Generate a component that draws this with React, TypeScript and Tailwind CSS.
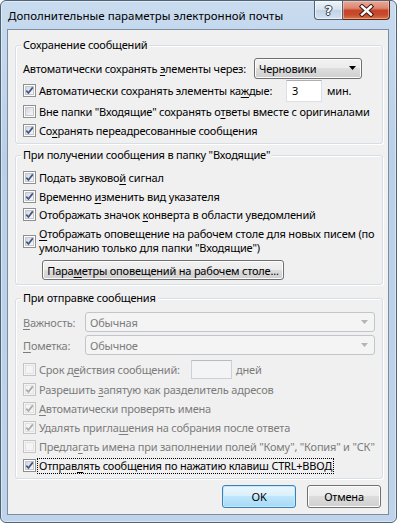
import React from 'react';

const U = ({ children }: { children: React.ReactNode }) => (
  <span className="underline underline-offset-[2px] decoration-[1px]">{children}</span>
);

const Check = ({ checked, disabled }: { checked?: boolean; disabled?: boolean }) => (
  <span
    className={`relative block w-[13px] h-[13px] shrink-0 border p-[1px] ${
      disabled ? 'border-[#c4c4c4] bg-[#f4f4f4]' : 'border-[#8e8f8f] bg-white'
    }`}
  >
    <span
      className={`block w-full h-full border ${
        disabled
          ? 'border-[#e2e2e2] bg-[#f4f4f4]'
          : 'border-[#c3c7cd] bg-[linear-gradient(135deg,#d4d7dc,#f9f9fa)]'
      }`}
    />
    {checked && (
      <svg className="absolute left-0 top-0" width="11" height="11" viewBox="0 0 11 11">
        <path
          d="M2.3 5.6 L4.4 8 L8.8 2.4"
          fill="none"
          stroke={disabled ? '#a9a9a9' : '#3f5687'}
          strokeWidth="1.7"
          strokeLinejoin="round"
        />
      </svg>
    )}
  </span>
);

const CheckRow = ({
  checked,
  disabled,
  h,
  children,
}: {
  checked?: boolean;
  disabled?: boolean;
  h: string;
  children: React.ReactNode;
}) => (
  <div className={`flex items-center ${h}`}>
    <Check checked={checked} disabled={disabled} />
    <span className={`ml-[3px] whitespace-nowrap ${disabled ? 'text-[#7c7c7c]' : ''}`}>{children}</span>
  </div>
);

const Group = ({ title, className, children }: { title: string; className: string; children: React.ReactNode }) => (
  <fieldset
    className={`ml-[7px] w-[368px] min-w-0 border border-[#d5dfe5] rounded-[3px] px-[7px] shadow-[inset_1px_1px_0_#fff,1px_1px_0_#fff] ${className}`}
  >
    <legend className="-ml-[2px] px-[2px] h-[16px] leading-[16px] bg-[#f0f0f0] whitespace-nowrap">{title}</legend>
    {children}
  </fieldset>
);

const Arrow = ({ color }: { color: string }) => (
  <svg width="7" height="4" viewBox="0 0 7 4">
    <path d="M0 0 H7 L3.5 4 Z" fill={color} />
  </svg>
);

const grayBtn =
  'border border-[#707070] rounded-[3px] bg-[linear-gradient(to_bottom,#f2f2f2,#ebebeb_49%,#dddddd_50%,#cfcfcf)] shadow-[inset_0_0_0_1px_#fcfcfc]';

export default function App() {
  return (
    <div className="w-[397px] h-[523px] bg-white font-['Noto_Sans',sans-serif] text-[11px] tracking-[-0.2px] leading-[15px] text-black">
      <div className="w-full h-full rounded-[6px] border border-[#4f6377] bg-[linear-gradient(to_bottom,#c8dbef,#bad0e9_30%,#bfd4eb)] shadow-[inset_0_0_0_1px_rgba(255,255,255,0.45)] flex flex-col">
        {/* title bar */}
        <div className="h-[28px] flex justify-between">
          <div className="pl-[7px] self-center text-[11.5px] tracking-normal whitespace-nowrap">
            Дополнительные параметры электронной почты
          </div>
          <div className="flex mr-[6px] h-[19px]">
            <div className="w-[29px] h-full border border-[#506174] border-t-0 rounded-bl-[4px] bg-[linear-gradient(to_bottom,#eef3f9,#d6e2ef_48%,#c2d3e6_52%,#d4e2f1)] flex items-center justify-center shadow-[inset_0_0_0_1px_rgba(255,255,255,0.6)]">
              <span className="text-white font-bold text-[13px] leading-[13px] font-['DejaVu_Sans',sans-serif] [text-shadow:0_0_1px_#2b3a4c,0_0_1px_#2b3a4c,1px_0_0_#3a4a5c,-1px_0_0_#3a4a5c,0_1px_0_#3a4a5c,0_-1px_0_#3a4a5c]">
                ?
              </span>
            </div>
            <div className="w-[47px] h-full border border-[#5b2418] border-t-0 border-l-0 rounded-br-[4px] bg-[linear-gradient(to_bottom,#e9aa9a,#dc8670_40%,#c7442b_52%,#c64a2c_75%,#d8763f)] flex items-center justify-center shadow-[inset_0_0_0_1px_rgba(255,210,200,0.5)]">
              <svg width="15" height="13" viewBox="0 0 15 13">
                <path d="M3 2.5 L12 10.5 M12 2.5 L3 10.5" stroke="#3d1a14" strokeWidth="4.4" strokeLinecap="square" />
                <path d="M3 2.5 L12 10.5 M12 2.5 L3 10.5" stroke="#ffffff" strokeWidth="2.4" strokeLinecap="square" />
              </svg>
            </div>
          </div>
        </div>

        {/* client area */}
        <div className="ml-[6px] w-[382px] h-[486px] border border-[#7d8d9f] bg-[#f0f0f0] flex flex-col">
          <Group title="Сохранение сообщений" className="mt-[7px] pt-[4px] pb-[3px]">
            <div className="flex items-center h-[22px]">
              <span className="w-[231px] whitespace-nowrap">
                Автоматически сохранять <U>э</U>лементы через:
              </span>
              <div className={`w-[108px] h-[21px] flex items-center justify-between pl-[4px] pr-[5px] ${grayBtn}`}>
                <span>Черновики</span>
                <Arrow color="#000" />
              </div>
            </div>
            <div className="flex items-center h-[23px]">
              <Check checked />
              <span className="ml-[3px] w-[247px] whitespace-nowrap">
                Автоматически сохранять элементы ка<U>ж</U>дые:
              </span>
              <div className="w-[36px] h-[22px] border border-[#dbdfe6] border-t-[#abadb3] bg-white flex items-center pl-[5px]">
                3
              </div>
              <span className="ml-[5px]">мин.</span>
            </div>
            <CheckRow h="h-[19px]">
              Вне папки "Входящие" сохранять о<U>т</U>веты вместе с оригиналами
            </CheckRow>
            <CheckRow h="h-[19px]" checked>
              Со<U>х</U>ранять переадресованные сообщения
            </CheckRow>
          </Group>

          <Group title={'При получении сообщения в папку "Входящие"'} className="mt-[3px] pt-[5px] pb-[4px]">
            <CheckRow h="h-[19px]" checked>
              Подать звуково<U>й</U> сигнал
            </CheckRow>
            <CheckRow h="h-[18px]" checked>
              Временно <U>и</U>зменить вид указателя
            </CheckRow>
            <CheckRow h="h-[19px]" checked>
              Отображать значок <U>к</U>онверта в области уведомлений
            </CheckRow>
            <div className="flex items-center h-[34px]">
              <Check checked />
              <span className="ml-[3px] leading-[14px] whitespace-nowrap">
                <U>О</U>тображать оповещение на рабочем столе для новых писем (по
                <br />
                умолчанию только для папки "Входящие")
              </span>
            </div>
            <div
              className={`ml-[19px] mt-[2px] w-[242px] h-[20px] flex items-center justify-center whitespace-nowrap ${grayBtn}`}
            >
              Пара<U>м</U>етры оповещений на рабочем столе...
            </div>
          </Group>

          <Group title="При отправке сообщения" className="mt-[5px] pt-[6px] pb-[3px]">
            <div className="flex items-center h-[20px]">
              <span className="w-[62px] text-[#7c7c7c]">
                <U>В</U>ажность:
              </span>
              <div className="flex-1 h-[20px] border border-[#c2c6ca] rounded-[3px] bg-[#f4f4f4] flex items-center justify-between pl-[4px] pr-[6px] text-[#7c7c7c]">
                <span>Обычная</span>
                <Arrow color="#b4b4b4" />
              </div>
            </div>
            <div className="flex items-center h-[20px] mt-[3px]">
              <span className="w-[62px] text-[#7c7c7c]">
                <U>П</U>ометка:
              </span>
              <div className="flex-1 h-[20px] border border-[#c2c6ca] rounded-[3px] bg-[#f4f4f4] flex items-center justify-between pl-[4px] pr-[6px] text-[#7c7c7c]">
                <span>Обычное</span>
                <Arrow color="#b4b4b4" />
              </div>
            </div>
            <div className="flex items-center h-[22px] mt-[3px]">
              <Check disabled />
              <span className="ml-[3px] w-[152px] whitespace-nowrap text-[#7c7c7c]">
                Срок д<U>е</U>йствия сообщений:
              </span>
              <div className="w-[41px] h-[19px] border border-[#c9d2da] border-t-[#b4bcc4] bg-[#f4f4f4]" />
              <span className="ml-[4px] text-[#7c7c7c]">дней</span>
            </div>
            <CheckRow h="h-[19px]" checked disabled>
              Разрешить <U>з</U>апятую как разделитель адресов
            </CheckRow>
            <CheckRow h="h-[19px]" checked disabled>
              <U>А</U>втоматически проверять имена
            </CheckRow>
            <CheckRow h="h-[19px]" checked disabled>
              Удалять пригла<U>ш</U>ения на собрания после ответа
            </CheckRow>
            <CheckRow h="h-[19px]" disabled>
              Предла<U>г</U>ать имена при заполнении полей "Кому", "Копия" и "СК"
            </CheckRow>
            <div className="flex items-center h-[19px]">
              <Check checked />
              <span className="ml-[2px] px-[1px] whitespace-nowrap outline-1 outline-dotted outline-black leading-[14px]">
                Отправ<U>л</U>ять сообщения по нажатию клавиш CTRL+ВВОД
              </span>
            </div>
          </Group>

          <div className="flex justify-end gap-[11px] mt-[6px] mr-[7px]">
            <div className="w-[74px] h-[23px] border border-[#3c7fb1] rounded-[3px] bg-[linear-gradient(to_bottom,#eaf6fd,#d9f0fc_49%,#bee6fd_50%,#a7d9f5)] shadow-[inset_0_0_0_1px_#c6e8fb] flex items-center justify-center">
              OK
            </div>
            <div className={`w-[74px] h-[23px] flex items-center justify-center ${grayBtn}`}>Отмена</div>
          </div>
        </div>
      </div>
    </div>
  );
}
